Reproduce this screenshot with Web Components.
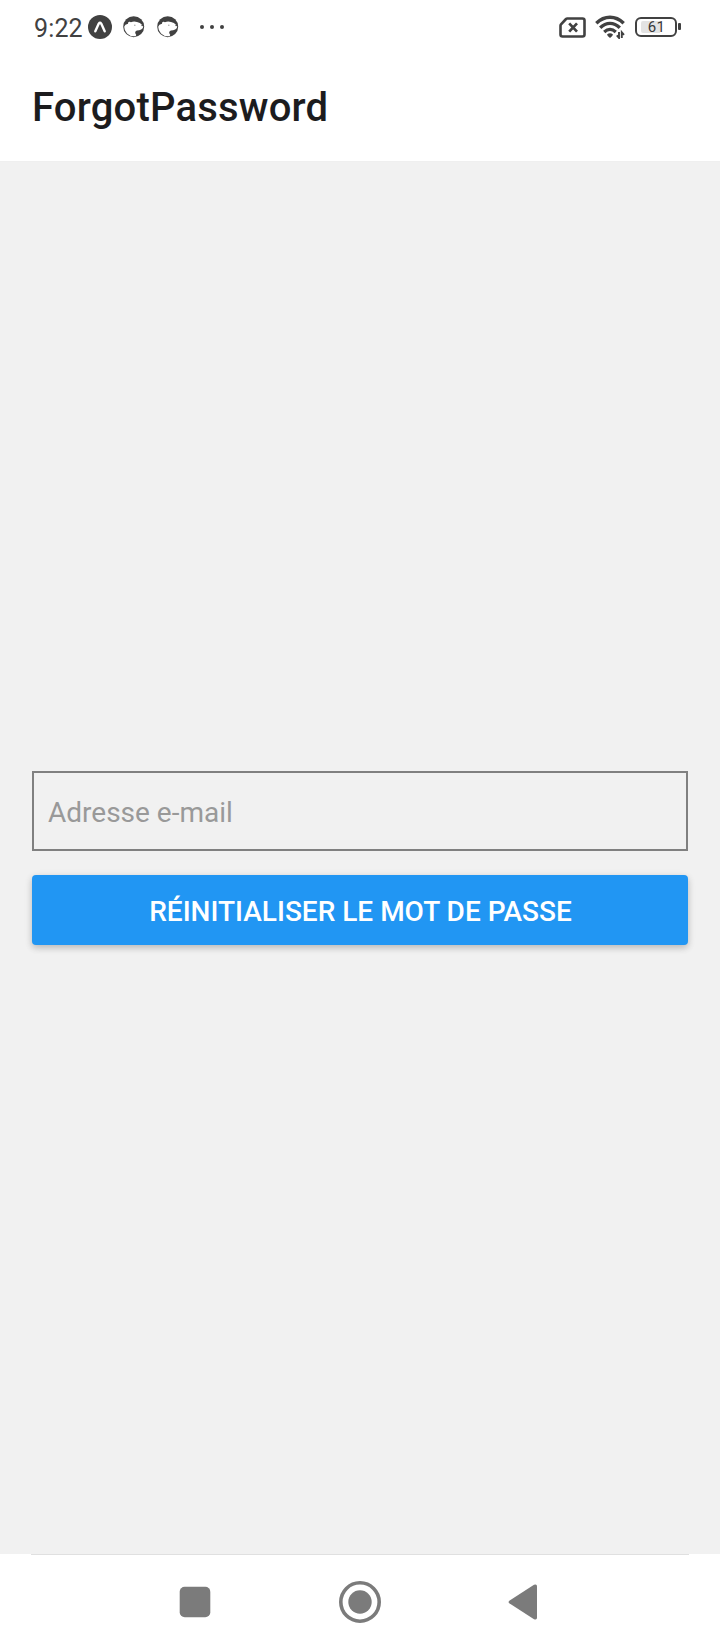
<!DOCTYPE html>
<html lang="fr">
<head>
<meta charset="utf-8">
<title>ForgotPassword</title>
<style>
html, body { margin: 0; height: 100%; background: #fff; font-family: Roboto, "Liberation Sans", sans-serif; }
</style>
</head>
<body>
<forgot-screen></forgot-screen>
<script>
const define = (name, html) => {
  const template = document.createElement('template');
  template.innerHTML = html;
  customElements.define(name, class extends HTMLElement {
    constructor() {
      super();
      this.attachShadow({ mode: 'open' }).append(template.content.cloneNode(true));
    }
  });
};

define('expo-icon', `
<style>:host{display:block;width:24px;height:24px} svg{display:block}</style>
<svg width="24" height="24" viewBox="0 0 24 24"><circle cx="12" cy="12" r="12" fill="#414141"/>
<path d="M7.3 16.3 10.8 8.6Q12 6.8 13.2 8.6L16.7 16.3" fill="none" stroke="#fff" stroke-width="2.4" stroke-linecap="round" stroke-linejoin="round"/></svg>`);

define('bear-icon', `
<style>:host{display:block;width:22px;height:22px} svg{display:block}</style>
<svg width="22" height="22" viewBox="0 0 22 22"><circle cx="10.7" cy="10.7" r="10.5" fill="#414141"/>
<path d="M1.2 10.7Q1.8 8.4 5 7.8Q4.8 5.8 6.4 5.7Q7.4 5.6 7.9 6.3Q11 4.9 14 6.1Q17.5 6.6 18.6 8.6Q20.3 9.3 20.2 10.6Q20.2 12.6 18.2 13.4Q16.2 14.4 14 14.4Q11.6 15.2 12.4 17.4Q13.8 18.8 12.8 20Q7.6 20.9 4 17.4Q1.2 14.5 1.2 10.7Z" fill="#fff"/>
<circle cx="11.8" cy="9.2" r=".8" fill="#aaa"/><circle cx="19.2" cy="9.5" r=".8" fill="#414141"/></svg>`);

define('sim-icon', `
<style>:host{display:block;width:27px;height:21px} svg{display:block}</style>
<svg width="27" height="21" viewBox="0 0 27 21" fill="none" stroke="#414141" stroke-linejoin="round">
<path d="M8.2 1.5H23.5Q25.5 1.5 25.5 3.5V17.5Q25.5 19.5 23.5 19.5H3.5Q1.5 19.5 1.5 17.5V8.7Q1.5 8 2 7.4L7 2Q7.5 1.5 8.2 1.5Z" stroke-width="2.6"/>
<path d="M10.2 6.4 18 14.7M18 6.4 10.2 14.7" stroke-width="2.7"/></svg>`);

define('wifi-icon', `
<style>:host{display:block;width:31px;height:24px} svg{display:block}</style>
<svg width="31" height="24" viewBox="0 0 31 24" fill="none" stroke="#414141">
<path d="M1.3 8.3Q7.5 2.3 15 2.3T28.7 8.3" stroke-width="3.4"/>
<path d="M5.2 12.8Q9.7 8.4 15 8.4T24.8 12.8" stroke-width="3.4"/>
<path d="M9.2 17Q12 14.4 15 14.4T20.8 17" stroke-width="3.2"/>
<path d="M12 19.6Q15 17 18 19.6Q17.9 20.7 15 23Q12.1 20.7 12 19.6Z" fill="#414141" stroke="none"/>
<path d="M24 17V22.9L21.8 20.4M26.8 23V17.3L29 19.8" stroke-width="1.9"/></svg>`);

define('battery-icon', `
<style>
:host{display:flex;align-items:center;width:47px;height:21px}
.shell{box-sizing:border-box;width:42px;height:20px;border:2px solid #414141;border-radius:6px;padding:2px 3px 2px 4px}
.level{height:12px;display:flex;align-items:center;justify-content:center;background:linear-gradient(90deg,#e3e3e3 61%,transparent 61%);border-radius:2px;font:400 15px/12px Roboto,sans-serif;letter-spacing:.3px;color:#383838}
.tip{width:3px;height:7px;background:#414141;margin-left:1px;border-radius:1px}
</style>
<div class="shell"><div class="level"><slot></slot></div></div><div class="tip"></div>`);

define('status-bar', `
<style>
:host{display:flex;box-sizing:border-box;height:56px;padding:0 38px 0 34px;align-items:flex-start}
.time{font-size:25px;line-height:57px;color:#414141;width:54px;white-space:nowrap;letter-spacing:.15px}
expo-icon{margin-top:15px}
bear-icon{margin:16px 0 0 11px}
bear-icon + bear-icon{margin-left:12px}
.dots{margin:25px 0 0 21px;display:flex;gap:6px}
.dots i{width:4px;height:4px;border-radius:50%;background:#414141}
.right{margin-left:auto;display:flex}
sim-icon{margin-top:17px} wifi-icon{margin:15px 0 0 9px} battery-icon{margin:16px 0 0 9px}
</style>
<span class="time">9:22</span><expo-icon></expo-icon><bear-icon></bear-icon><bear-icon></bear-icon>
<div class="dots"><i></i><i></i><i></i></div>
<div class="right"><sim-icon></sim-icon><wifi-icon></wifi-icon><battery-icon>61</battery-icon></div>`);

define('app-header', `
<style>:host{display:block;box-sizing:border-box;height:105px;padding:0 32px;font-size:40px;font-weight:500;line-height:103px;letter-spacing:.2px;color:#1c1c1e}</style>
<slot></slot>`);

define('email-field', `
<style>
:host{display:block}
input{display:block;box-sizing:border-box;width:100%;height:80px;margin:0;border:2px solid #808080;border-radius:0;background:transparent;padding:3px 14px 0;font:400 28px Roboto,sans-serif;color:#222;outline:0}
input::placeholder{color:#999;opacity:1}
</style>
<input type="email" placeholder="Adresse e-mail">`);

define('action-button', `
<style>
:host{display:block}
button{display:block;box-sizing:border-box;width:100%;height:70px;margin:0;padding:2px 0 0 1px;border:0;border-radius:4px;background:#2196f3;color:#fff;font:500 28px Roboto,sans-serif;white-space:nowrap;box-shadow:0 3px 6px rgba(0,0,0,.17),0 2px 10px rgba(0,0,0,.08)}
</style>
<button><slot></slot></button>`);

define('nav-bar', `
<style>
:host{display:block;box-sizing:border-box;height:96px;background:#fff}
.line{height:1px;margin:0 31px;background:#e0e0e0}
svg{display:block}
.keys{height:94px;display:flex;align-items:center;padding-left:179px}
.home{margin-left:128px}.back{margin-left:126px}
</style>
<div class="line"></div>
<div class="keys">
<svg width="32" height="32" viewBox="0 0 32 32"><rect x=".7" y=".7" width="30.6" height="30.6" rx="5" fill="#7b7b7b"/></svg>
<svg class="home" width="42" height="42" viewBox="0 0 42 42"><circle cx="21" cy="21" r="19.2" fill="none" stroke="#7b7b7b" stroke-width="3.6"/><circle cx="21" cy="21" r="11.7" fill="#7b7b7b"/></svg>
<svg class="back" width="30" height="36" viewBox="0 0 30 36"><path d="M2.3 16.7 27 .8Q30 -.4 30 2.2V33.8Q30 36.4 27 35.2L2.3 19.3Q.8 18 2.3 16.7Z" fill="#7b7b7b"/></svg>
</div>`);

define('forgot-screen', `
<style>
:host{display:flex;flex-direction:column;width:720px;height:1650px;overflow:hidden;background:#fff}
main{flex:1;display:flex;flex-direction:column;justify-content:center;gap:24px;padding:0 32px;background:#f1f1f1;border-top:1px solid #efefef;box-sizing:border-box}
</style>
<status-bar></status-bar>
<app-header>ForgotPassword</app-header>
<main><email-field></email-field><action-button>RÉINITIALISER LE MOT DE PASSE</action-button></main>
<nav-bar></nav-bar>`);
</script>
</body>
</html>
